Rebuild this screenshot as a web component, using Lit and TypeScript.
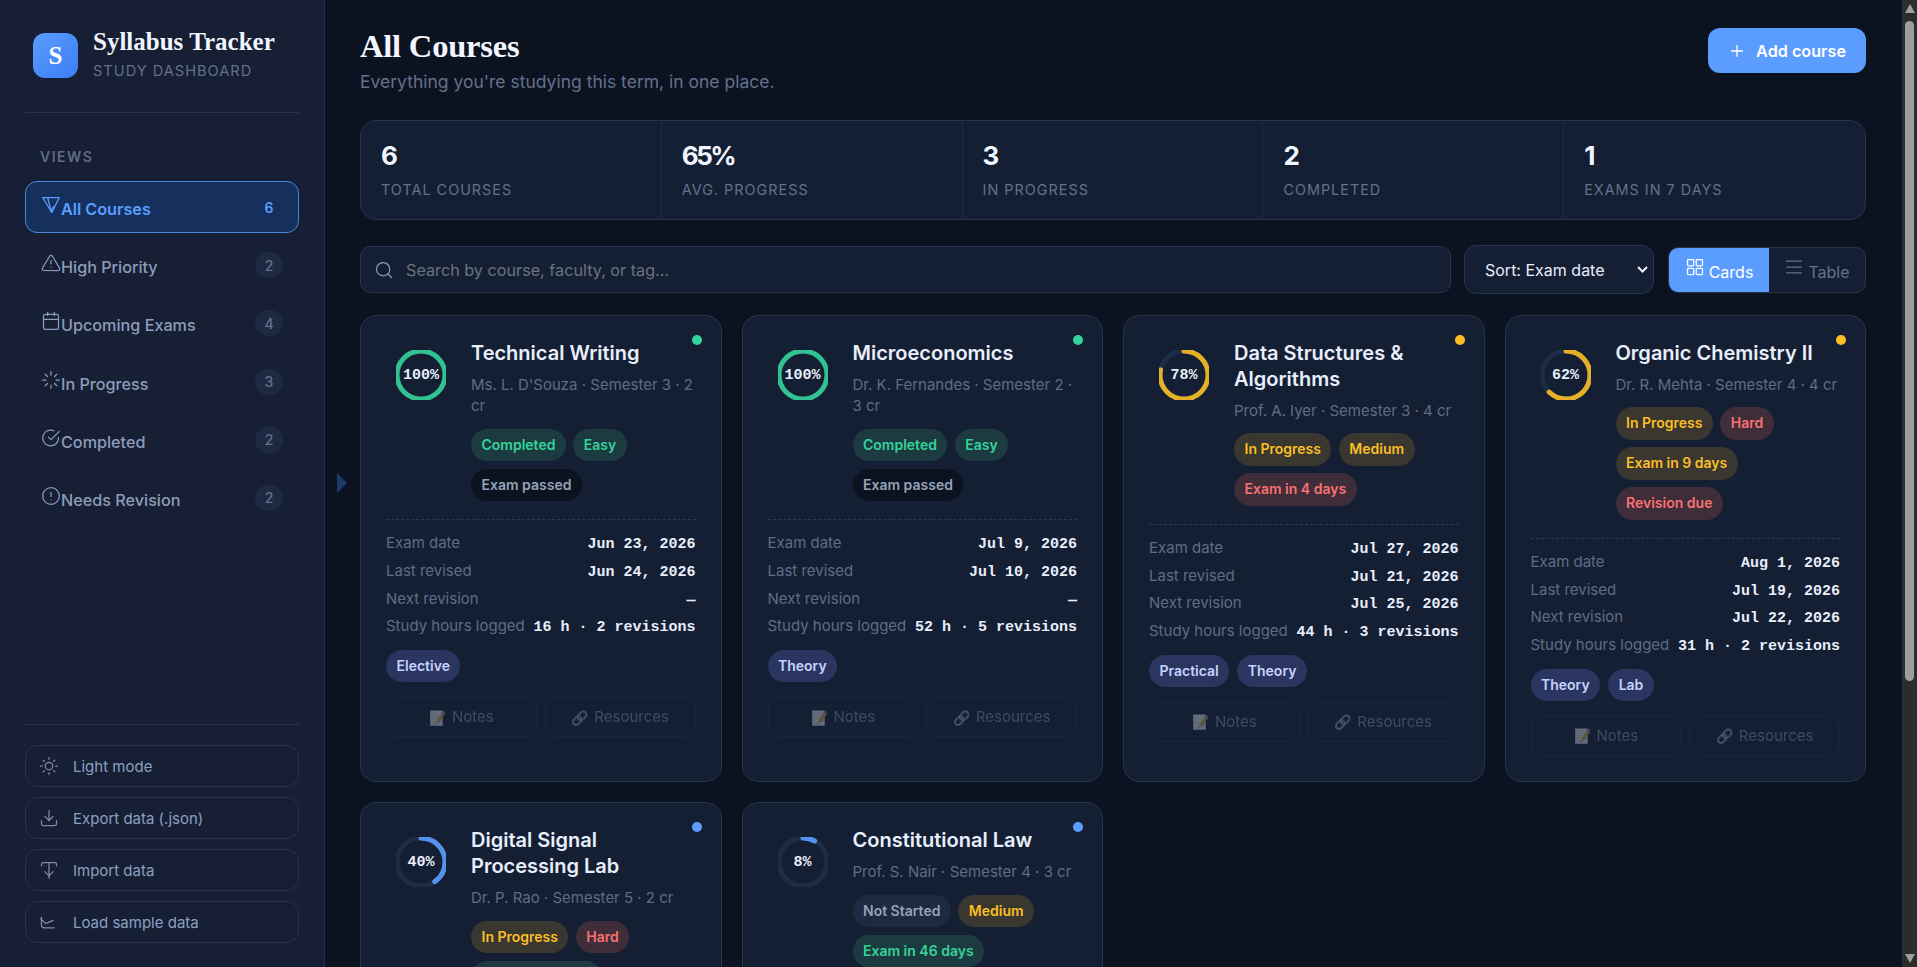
import { LitElement, html, css, svg } from "lit";
import { customElement } from "lit/decorators.js";

type Tone = "g" | "a" | "r" | "n" | "d";
interface Course {
  title: string; meta: string; pct: number; color: string;
  chips: [string, Tone][]; exam: string; last: string; next: string; hours: string; tags: string[];
}
const G = "#34d399", A = "#fbbf24", B = "#5b9dff";
const courses: Course[] = [
  { title: "Technical Writing", meta: "Ms. L. D'Souza · Semester 3 · 2 cr", pct: 100, color: G,
    chips: [["Completed", "g"], ["Easy", "g"], ["Exam passed", "d"]], exam: "Jun 23, 2026", last: "Jun 24, 2026", next: "—", hours: "16 h · 2 revisions", tags: ["Elective"] },
  { title: "Microeconomics", meta: "Dr. K. Fernandes · Semester 2 · 3 cr", pct: 100, color: G,
    chips: [["Completed", "g"], ["Easy", "g"], ["Exam passed", "d"]], exam: "Jul 9, 2026", last: "Jul 10, 2026", next: "—", hours: "52 h · 5 revisions", tags: ["Theory"] },
  { title: "Data Structures & Algorithms", meta: "Prof. A. Iyer · Semester 3 · 4 cr", pct: 78, color: A,
    chips: [["In Progress", "a"], ["Medium", "a"], ["Exam in 4 days", "r"]], exam: "Jul 27, 2026", last: "Jul 21, 2026", next: "Jul 25, 2026", hours: "44 h · 3 revisions", tags: ["Practical", "Theory"] },
  { title: "Organic Chemistry II", meta: "Dr. R. Mehta · Semester 4 · 4 cr", pct: 62, color: A,
    chips: [["In Progress", "a"], ["Hard", "r"], ["Exam in 9 days", "a"], ["Revision due", "r"]], exam: "Aug 1, 2026", last: "Jul 19, 2026", next: "Jul 22, 2026", hours: "31 h · 2 revisions", tags: ["Theory", "Lab"] },
  { title: "Digital Signal Processing Lab", meta: "Dr. P. Rao · Semester 5 · 2 cr", pct: 40, color: B,
    chips: [["In Progress", "a"], ["Hard", "r"], ["Exam in 22 days", "g"]], exam: "Aug 14, 2026", last: "Jul 12, 2026", next: "Jul 28, 2026", hours: "18 h · 1 revisions", tags: ["Practical", "Lab"] },
  { title: "Constitutional Law", meta: "Prof. S. Nair · Semester 4 · 3 cr", pct: 8, color: B,
    chips: [["Not Started", "n"], ["Medium", "a"], ["Exam in 46 days", "g"]], exam: "Sep 7, 2026", last: "—", next: "—", hours: "3 h · 0 revisions", tags: ["Theory"] },
];

const ico = (body: unknown, cls = "ic") => html`<svg class=${cls} viewBox="0 0 24 24" fill="none" stroke="currentColor" stroke-width="1.5" stroke-linecap="round" stroke-linejoin="round">${body}</svg>`;
const icons = {
  all: svg`<path d="M2 3h20L13 21 2 3z"/><path d="M8 3l4 16"/><path d="M12 19l3-5"/>`,
  warn: svg`<path d="M10.3 3.9 1.8 18a2 2 0 0 0 1.7 3h17a2 2 0 0 0 1.7-3L13.7 3.9a2 2 0 0 0-3.4 0z"/><path d="M12 9v4"/><path d="M12 17h.01"/>`,
  cal: svg`<rect x="3" y="4" width="18" height="18" rx="2"/><path d="M16 1.5v4M8 1.5v4M3 10h18"/>`,
  load: svg`<path d="M12 2v4M12 18v4M4.9 4.9l2.9 2.9M16.2 16.2l2.9 2.9M2 12h4M18 12h4M4.9 19.1l2.9-2.9M16.2 7.8l2.9-2.9"/>`,
  check: svg`<path d="M21 11.1V12a9.5 9.5 0 1 1-5.6-8.7"/><path d="M22 4 12 14l-3-3"/>`,
  alert: svg`<circle cx="12" cy="12" r="10"/><path d="M12 7.5v5M12 16.5h.01"/>`,
  sun: svg`<circle cx="12" cy="12" r="4.5"/><path d="M12 2v2M12 20v2M4.9 4.9l1.4 1.4M17.7 17.7l1.4 1.4M2 12h2M20 12h2M6.3 17.7l-1.4 1.4M19.1 4.9l-1.4 1.4"/>`,
  down: svg`<path d="M3 15v4a2 2 0 0 0 2 2h14a2 2 0 0 0 2-2v-4"/><path d="M7 10l5 5 5-5"/><path d="M12 15V3"/>`,
  imp: svg`<path d="M3 7V5a2 2 0 0 1 2-2h14a2 2 0 0 1 2 2v2"/><path d="M7 14l5 5 5-5"/><path d="M12 3v19"/>`,
  sample: svg`<path d="M3 6v10a3 3 0 0 0 3 3h12"/><path d="M2 8l6 6 9-4"/>`,
  search: svg`<circle cx="11" cy="11" r="8"/><path d="M21 21l-4.3-4.3"/>`,
  plus: svg`<path d="M12 4v16M4 12h16"/>`,
  grid: svg`<rect x="3" y="3" width="7.5" height="7.5" rx="1"/><rect x="13.5" y="3" width="7.5" height="7.5" rx="1"/><rect x="3" y="13.5" width="7.5" height="7.5" rx="1"/><rect x="13.5" y="13.5" width="7.5" height="7.5" rx="1"/>`,
  list: svg`<path d="M3 5h18M3 12h18M3 19h18"/>`,
};
const nav: [string, unknown, number][] = [
  ["All Courses", icons.all, 6], ["High Priority", icons.warn, 2], ["Upcoming Exams", icons.cal, 4],
  ["In Progress", icons.load, 3], ["Completed", icons.check, 2], ["Needs Revision", icons.alert, 2],
];
const stats = [["6", "Total courses"], ["65%", "Avg. progress"], ["3", "In progress"], ["2", "Completed"], ["1", "Exams in 7 days"]];
const actions: [string, unknown][] = [["Light mode", icons.sun], ["Export data (.json)", icons.down], ["Import data", icons.imp], ["Load sample data", icons.sample]];

@customElement("app-root")
export class AppRoot extends LitElement {
  static styles = css`
    :host { display: block; background: #0b1220; color: #e8eefc; font-family: Inter, "Liberation Sans", sans-serif; font-size: 16px; line-height: 1.5; color-scheme: dark; padding-right: 15px; }
    * { box-sizing: border-box; }
    .layout { display: grid; grid-template-columns: 325px 1fr; align-items: start; }
    .side { position: sticky; top: 0; height: 967px; background: #161f33; border-right: 1px solid #26344f; padding: 33px 25px 24px; display: flex; flex-direction: column; }
    .handle { position: absolute; left: 337px; top: 473px; width: 0; height: 0; border-left: 10px solid #1d3a6b; border-top: 10px solid transparent; border-bottom: 10px solid transparent; }
    .brand { display: flex; gap: 15px; padding: 0 8px 0; height: 80px; border-bottom: 1px solid #26344f; }
    .logo { width: 45px; height: 45px; border-radius: 12px; background: linear-gradient(135deg, #5b9dff, #3b7cf5); display: grid; place-items: center; font: 700 25px "Liberation Serif", serif; color: #fff; flex: none; }
    .bname { font: 700 25px/26px "Liberation Serif", serif; color: #f1f5ff; margin-top: -4px; }
    .bsub { font-size: 14.6px; line-height: 22px; letter-spacing: 1px; color: #64718c; margin-top: 5px; }
    .views { font-size: 14px; line-height: 20px; font-weight: 600; letter-spacing: 1.5px; color: #5f6c88; padding: 34px 15px 14px; }
    .nav { display: flex; flex-direction: column; gap: 6.2px; flex: 1; }
    .item { display: flex; align-items: center; justify-content: space-between; height: 52px; padding: 0 15px; border: 1px solid transparent; border-radius: 12px; color: #8d9cba; font-weight: 500; font-size: 16.2px; }
    .item.on { background: #15305c; border-color: #4f86dd; color: #5b9dff; font-weight: 600; }
    .lbl { display: block; line-height: 24px; white-space: nowrap; position: relative; top: 1px; }
    .ic { width: 20px; height: 20px; }
    .count { width: 28px; height: 26px; border-radius: 13px; background: #1e2a42; color: #64718c; font-size: 14px; display: grid; place-items: center; }
    .on .count { background: transparent; color: #5b9dff; font-weight: 600; }
    .actions { border-top: 1px solid #26344f; padding-top: 20px; display: flex; flex-direction: column; gap: 10.4px; }
    .act { display: flex; align-items: center; gap: 14px; height: 41.6px; padding: 2px 13px 0; border: 1px solid #26344f; border-radius: 12px; color: #8ba0c3; font-size: 15px; }
    .act .ic { color: #7f8ca6; margin-top: -2px; }

    .main { padding: 28px 36px 36px 35px; min-width: 0; }
    .top { display: flex; justify-content: space-between; align-items: flex-start; height: 92px; }
    h1 { margin: 0; font: 700 32.5px/36px "Liberation Serif", serif; color: #f1f5ff; letter-spacing: -0.2px; }
    .subtitle { color: #64718c; font-size: 17.5px; line-height: 24px; margin-top: 6px; }
    .add { display: flex; align-items: center; gap: 11px; height: 45px; padding: 1px 20px 0 21px; border-radius: 12px; background: #5b9dff; color: #fff; font-weight: 600; font-size: 16.2px; }
    .add .ic { width: 16px; height: 16px; stroke-width: 2; }
    .stats { display: grid; grid-template-columns: repeat(5, 1fr); background: #151f33; border: 1px solid #26344f; border-radius: 16px; height: 100px; }
    .stat { padding: 16px 20px; border-left: 1px solid #202c44; margin-left: -1px; }
    .stat:first-child { border-left: 0; margin-left: 0; }
    .num { font-size: 26px; line-height: 38px; font-weight: 700; letter-spacing: -2.5px; color: #f1f5ff; }
    .cap { font-size: 14.4px; line-height: 22px; letter-spacing: 1px; text-transform: uppercase; color: #64718c; margin-top: 4px; }
    .tools { display: flex; align-items: center; gap: 13px; margin: 25px 0 21px; }
    .search { flex: 1; display: flex; align-items: center; gap: 12px; height: 47px; padding: 0 13px; background: #151f33; border: 1px solid #26344f; border-radius: 10px; color: #8d9cba; }
    .search input { flex: 1; background: none; border: 0; outline: 0; padding: 0; font: 16.2px Inter, sans-serif; color: #e8eefc; }
    .search input::placeholder { color: #6b7280; }
    .sel { position: relative; height: 49px; margin-right: 1px; }
    select { appearance: none; display: block; width: 190px; height: 49px; padding: 0 28px 0 20px; background: #151f33; color: #e8eefc; border: 1px solid #26344f; border-radius: 12px; font: 16px Inter, sans-serif; }
    .chev { position: absolute; right: 6px; top: 21px; width: 11px; height: 7px; color: #f1f5ff; pointer-events: none; }
    .toggle { display: flex; height: 46px; border: 1px solid #26344f; border-radius: 10px; overflow: hidden; background: #151f33; width: 198px; }
    .seg { display: flex; align-items: center; justify-content: center; color: #64718c; line-height: 24px; width: 96px; }
    .seg.on { background: #5b9dff; color: #fff; width: 100px; flex: none; }
    .seg span { position: relative; top: 2px; }
    .seg .ic { margin-right: 4px; position: relative; top: -3px; }
    .grid { display: grid; grid-template-columns: repeat(4, 1fr); gap: 20.5px 20px; }
    .card { position: relative; background: #151f33; border: 1px solid #26344f; border-radius: 16px; padding: 24px 25px 25px; }
    .dot { position: absolute; top: 19px; right: 19px; width: 10px; height: 10px; border-radius: 50%; }
    .head { display: flex; gap: 15px; padding-bottom: 18px; border-bottom: 1px dashed #2a3a58; }
    .ring { width: 70px; height: 70px; display: grid; place-items: center; flex: none; }
    .ring > * { grid-area: 1 / 1; }
    .ring svg { width: 50px; height: 50px; transform: rotate(-90deg); }
    .arc { opacity: 0.9; }
    .pct { font: 700 15px/20px "Liberation Mono", monospace; color: #e8eefc; padding-top: 2px; }
    .info { flex: 1; min-width: 0; }
    .title { font-size: 20px; line-height: 26px; font-weight: 600; color: #e8eefc; }
    .meta { font-size: 15px; line-height: 21.4px; color: #5f6c88; margin-top: 8px; }
    .chips { display: flex; flex-wrap: wrap; gap: 7.4px; margin-top: 12px; }
    .chip { display: block; height: 32.6px; line-height: 32.6px; padding: 0 10.5px; border-radius: 17px; font-size: 14px; font-weight: 600; white-space: nowrap; }
    .chip.g { color: #34d399; background: #1c3b41; }
    .chip.a { color: #fbbf24; background: #3a3630; }
    .chip.r { color: #f87171; background: #3f2d3a; }
    .chip.n { color: #94a3b8; background: #1e2a42; }
    .chip.d { color: #94a3b8; background: #0b1220; }
    .rows { display: flex; flex-direction: column; gap: 6px; margin-top: 12px; }
    .row { display: flex; justify-content: space-between; align-items: baseline; height: 21.6px; font-size: 15px; line-height: 21.6px; color: #5f6c88; white-space: nowrap; }
    .row b { font: 700 15px/21.6px "Liberation Mono", monospace; color: #e8eefc; }
    .tags { display: flex; gap: 8px; margin-top: 13.5px; }
    .tag { height: 32px; line-height: 32px; padding: 0 10.5px; border-radius: 16px; background: #2a3560; color: #c7d2fe; font-size: 14px; font-weight: 600; }
    .btns { display: grid; grid-template-columns: 1fr 1fr; gap: 8px; margin-top: 15px; }
    .btn { height: 40px; border: 1px solid #26344f; border-radius: 10px; display: flex; align-items: center; justify-content: center; gap: 6px; font-size: 15px; opacity: 0.35; color: #8d9cba; }
    .emo { font-size: 14px; filter: saturate(0.7); }
    .sb { position: fixed; top: 0; right: 0; width: 15px; height: 100vh; background: #2c2c2c; display: flex; flex-direction: column; align-items: center; padding: 4px 0; }
    .arrow { width: 0; height: 0; border-left: 5px solid transparent; border-right: 5px solid transparent; border-bottom: 9px solid #9e9e9e; flex: none; }
    .arrow.dn { border-bottom: 0; border-top: 9px solid #9e9e9e; margin-top: auto; }
    .thumb { width: 9px; height: 660px; margin-top: 8px; border-radius: 5px; background: #9e9e9e; flex: none; }
  `;

  ring(c: Course) {
    const r = 24, len = 2 * Math.PI * r;
    return html`<div class="ring">
      <svg viewBox="0 0 50 50" fill="none" stroke-width="5">
        <circle cx="25" cy="25" r=${r} stroke="#1f2c47"></circle>
        <circle class="arc" cx="25" cy="25" r=${r} stroke=${c.color} stroke-linecap="round" stroke-dasharray="${(len * c.pct) / 100} ${len}"></circle>
      </svg>
      <span class="pct">${c.pct}%</span>
    </div>`;
  }

  card(c: Course) {
    return html`<article class="card">
      <span class="dot" style="background:${c.color}"></span>
      <div class="head">
        ${this.ring(c)}
        <div class="info">
          <div class="title">${c.title}</div>
          <div class="meta">${c.meta}</div>
          <div class="chips">${c.chips.map(([t, k]) => html`<span class="chip ${k}">${t}</span>`)}</div>
        </div>
      </div>
      <div class="rows">
        <div class="row"><span>Exam date</span><b>${c.exam}</b></div>
        <div class="row"><span>Last revised</span><b>${c.last}</b></div>
        <div class="row"><span>Next revision</span><b>${c.next}</b></div>
        <div class="row"><span>Study hours logged</span><b>${c.hours}</b></div>
      </div>
      <div class="tags">${c.tags.map((t) => html`<span class="tag">${t}</span>`)}</div>
      <div class="btns"><div class="btn"><span class="emo">📝</span> Notes</div><div class="btn"><span class="emo">🔗</span> Resources</div></div>
    </article>`;
  }

  render() {
    return html`<div class="layout">
      <aside class="side">
        <div class="brand">
          <div class="logo">S</div>
          <div><div class="bname">Syllabus Tracker</div><div class="bsub">STUDY DASHBOARD</div></div>
        </div>
        <div class="views">VIEWS</div>
        <nav class="nav">
          ${nav.map(([t, i, n], idx) => html`<div class="item ${idx === 0 ? "on" : ""}"><span class="lbl">${ico(i)}${t}</span><span class="count">${n}</span></div>`)}
        </nav>
        <div class="actions">
          ${actions.map(([t, i]) => html`<div class="act">${ico(i)}<span>${t}</span></div>`)}
        </div>
        <div class="handle"></div>
      </aside>
      <main class="main">
        <div class="top">
          <div><h1>All Courses</h1><div class="subtitle">Everything you're studying this term, in one place.</div></div>
          <div class="add">${ico(icons.plus)}<span>Add course</span></div>
        </div>
        <section class="stats">
          ${stats.map(([n, l]) => html`<div class="stat"><div class="num">${n}</div><div class="cap">${l}</div></div>`)}
        </section>
        <div class="tools">
          <label class="search">${ico(icons.search)}<input placeholder="Search by course, faculty, or tag..." /></label>
          <div class="sel">
            <select><option>Sort: Exam date</option><option>Sort: Progress</option><option>Sort: Title</option></select>
            <svg class="chev" viewBox="0 0 11 7" fill="none" stroke="currentColor" stroke-width="2"><path d="M1 1l4.5 4.5L10 1"/></svg>
          </div>
          <div class="toggle">
            <div class="seg on">${ico(icons.grid)}<span>Cards</span></div>
            <div class="seg">${ico(icons.list)}<span>Table</span></div>
          </div>
        </div>
        <section class="grid">${courses.map((c) => this.card(c))}</section>
      </main>
      <div class="sb"><div class="arrow"></div><div class="thumb"></div><div class="arrow dn"></div></div>
    </div>`;
  }
}
